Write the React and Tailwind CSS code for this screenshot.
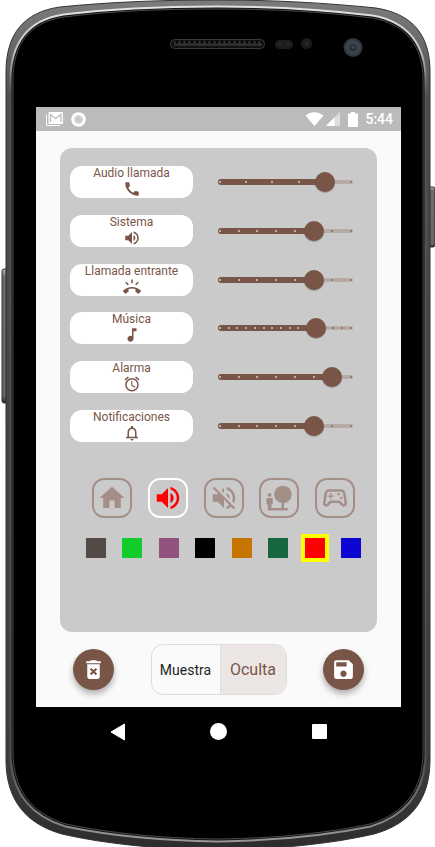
import { useState } from "react";
import {
  MdCall,
  MdVolumeUp,
  MdRingVolume,
  MdMusicNote,
  MdAlarm,
  MdNotificationsNone,
  MdHome,
  MdVolumeOff,
  MdNaturePeople,
  MdOutlineSportsEsports,
  MdDeleteForever,
  MdSave,
} from "react-icons/md";

const CHANNELS = [
  { id: "call", label: "Audio llamada", Icon: MdCall, value: 4, max: 5 },
  { id: "system", label: "Sistema", Icon: MdVolumeUp, value: 5, max: 7 },
  { id: "ring", label: "Llamada entrante", Icon: MdRingVolume, value: 5, max: 7 },
  { id: "music", label: "Música", Icon: MdMusicNote, value: 11, max: 15 },
  { id: "alarm", label: "Alarma", Icon: MdAlarm, value: 6, max: 7 },
  { id: "notifications", label: "Notificaciones", Icon: MdNotificationsNone, value: 5, max: 7 },
];

const PROFILES = [
  { id: "home", name: "Casa", Icon: MdHome },
  { id: "sound", name: "Sonido", Icon: MdVolumeUp },
  { id: "mute", name: "Silencio", Icon: MdVolumeOff },
  { id: "outdoors", name: "Exterior", Icon: MdNaturePeople },
  { id: "games", name: "Juegos", Icon: MdOutlineSportsEsports },
];

const COLORS = [
  { name: "Gris", style: "bg-[#544b49]" },
  { name: "Verde", style: "bg-[#11cd2c]" },
  { name: "Malva", style: "bg-[#91547f]" },
  { name: "Negro", style: "bg-black" },
  { name: "Naranja", style: "bg-[#c67500]" },
  { name: "Verde oscuro", style: "bg-[#14673f]" },
  { name: "Rojo", style: "bg-[#ff0000]" },
  { name: "Azul", style: "bg-[#0d05d2]" },
];

const OUTER =
  "M6 72C6 34 24 12 60 7C110 2 160 0 218 0C276 0 326 3 376 8C412 14 430 34 430 72V760C430 800 410 824 374 834C330 844 280 849 218 850C156 849 106 844 62 834C26 824 6 800 6 760Z";
const INNER =
  "M13 80C13 44 30 22 64 17C112 11 160 9 218 9C276 9 324 12 372 18C406 24 423 46 423 80V752C423 788 406 813 370 824C326 833 280 838 218 839C156 838 110 833 66 824C30 813 13 788 13 752Z";

function PhoneBody() {
  return (
    <svg
      className="absolute inset-0 h-full w-full"
      viewBox="0 0 435 847"
      preserveAspectRatio="none"
      aria-hidden="true"
    >
      <defs>
        <linearGradient id="body" x1="0" y1="0" x2="0" y2="1">
          <stop offset="0" stopColor="#7c7c7c" />
          <stop offset="0.04" stopColor="#6e6e6e" />
          <stop offset="0.12" stopColor="#4c4c4c" />
          <stop offset="0.9" stopColor="#3c3c3c" />
          <stop offset="1" stopColor="#2c2c2c" />
        </linearGradient>
        <linearGradient id="shine" x1="0" y1="0" x2="0" y2="1">
          <stop offset="0" stopColor="#e2e2e2" />
          <stop offset="0.05" stopColor="#c4c4c4" />
          <stop offset="0.1" stopColor="#555" />
          <stop offset="0.9" stopColor="#505050" />
          <stop offset="0.96" stopColor="#777" />
          <stop offset="1" stopColor="#969696" />
        </linearGradient>
        <linearGradient id="key" x1="0" y1="0" x2="0" y2="1">
          <stop offset="0" stopColor="#b5b5b5" />
          <stop offset="0.06" stopColor="#6c6c6c" />
          <stop offset="0.95" stopColor="#666" />
          <stop offset="1" stopColor="#222" />
        </linearGradient>
        <pattern id="mesh" width="5" height="5" patternUnits="userSpaceOnUse">
          <rect width="5" height="5" fill="#303030" />
          <circle cx="2" cy="2" r="1.5" fill="#030303" />
        </pattern>
      </defs>
      <rect x="2" y="269" width="7" height="134" rx="2" fill="url(#key)" stroke="#333" />
      <rect x="428" y="187" width="7" height="60" rx="2" fill="url(#key)" stroke="#333" />
      <path d={OUTER} fill="url(#body)" stroke="#333" />
      <path d={INNER} fill="#000" stroke="url(#shine)" strokeWidth="7" />
      <path d={INNER} fill="#000" stroke="#111" strokeWidth="3" />
      <path d={INNER} fill="#000" stroke="#484848" strokeWidth="1" />
      <rect x="170.500" y="39.500" width="94" height="9" rx="4" fill="#111" stroke="#393939" />
      <rect x="174" y="41" width="88" height="5" fill="url(#mesh)" />
      <rect x="275" y="40" width="18" height="9" rx="4.500" fill="#1c1c1c" />
      <circle cx="280" cy="44" r="1.500" fill="#2c2c2c" />
      <circle cx="288" cy="44" r="1.500" fill="#2c2c2c" />
      <circle cx="306.500" cy="43.500" r="5.500" fill="#1b1b1b" />
      <circle cx="306.500" cy="43.500" r="2.500" fill="#252525" />
      <circle cx="353" cy="47.500" r="9.500" fill="#30343b" />
      <circle cx="353" cy="47.500" r="7.500" fill="#3d434c" />
      <circle cx="353" cy="47.500" r="3.500" fill="#282d37" />
      <circle cx="353" cy="47" r="1.500" fill="#41485a" />
    </svg>
  );
}

function StatusBar() {
  return (
    <header className="flex h-6 items-center justify-between bg-[#bbbbbb] pr-2 pl-[10px] text-white">
      <div className="flex items-center gap-2">
        <svg className="h-[14px] w-[17px]" viewBox="0 0 17 14" aria-hidden="true">
          <path d="M.5 3V13.500H14" fill="none" stroke="currentColor" />
          <rect x="2.500" width="14.500" height="12" rx="1" fill="currentColor" />
          <path d="M4.500 10V2.500L9.750 6.500L15 2.500V10" fill="none" stroke="#bbb" strokeWidth="1.300" />
        </svg>
        <svg className="h-[15px] w-[15px]" viewBox="0 0 15 15" aria-hidden="true">
          <circle cx="7.500" cy="7.500" r="7.300" fill="currentColor" />
          <circle cx="7.500" cy="7.500" r="4.600" fill="#d8d8d8" />
          <circle cx="7.500" cy="7.500" r="2.800" fill="#cacaca" />
        </svg>
      </div>
      <div className="flex items-center">
        <svg className="h-[14px] w-[19px]" viewBox="0 0 19 14" aria-hidden="true">
          <path d="M.5 3.500C6 -1 13 -1 18.500 3.500L9.500 14Z" fill="currentColor" />
        </svg>
        <svg className="ml-[2px] h-[14px] w-[14px]" viewBox="0 0 14 14" aria-hidden="true">
          <path d="M14 0V14H0Z" fill="#dedede" />
          <path d="M8.500 5.500V14H0Z" fill="currentColor" />
        </svg>
        <svg className="ml-2 h-[15px] w-[10px]" viewBox="0 0 10 15" aria-hidden="true">
          <path d="M3 0H7V1.500H9.500L10 2V14.500L9.500 15H.5L0 14.500V2L.5 1.500H3Z" fill="currentColor" />
        </svg>
        <time className="ml-[7px] text-sm font-medium">5:44</time>
      </div>
    </header>
  );
}

function VolumeRow({ channel }) {
  const { id, label, Icon, max } = channel;
  const [value, setValue] = useState(channel.value);
  const steps = Array.from({ length: max + 1 }, (_, i) => i);

  return (
    <div className="flex items-center justify-between">
      <label
        htmlFor={id}
        className="flex h-8 w-[123px] flex-col items-center rounded-xl bg-white text-xs leading-[14px] text-[#795548]"
      >
        {label}
        <Icon className="h-[18px] w-[18px]" />
      </label>
      <div className="relative h-5 w-[151px]">
        <div className="absolute inset-x-2 top-2 h-1 rounded-full bg-[#b6aaa6]" />
        <div className="absolute inset-x-[10px] top-[7px] h-[6px]">
          <div
            className="-ml-[2px] h-full rounded-full bg-[#795548]"
            style={{ width: `${(value / max) * 100}%` }}
          />
        </div>
        <div className="absolute inset-x-[9px] top-[9px] flex justify-between">
          {steps.map((step) => (
            <span
              key={step}
              className={
                step < value
                  ? "h-[2px] w-[2px] rounded-full bg-[#d5c9c5]"
                  : "h-[2px] w-[2px] rounded-full bg-[#8b6c61]"
              }
            />
          ))}
        </div>
        <input
          id={id}
          type="range"
          min="0"
          max={max}
          value={value}
          onChange={(e) => setValue(Number(e.target.value))}
          className="absolute inset-0 m-0 h-5 w-full cursor-pointer appearance-none bg-transparent [&::-webkit-slider-thumb]:h-5 [&::-webkit-slider-thumb]:w-5 [&::-webkit-slider-thumb]:appearance-none [&::-webkit-slider-thumb]:rounded-full [&::-webkit-slider-thumb]:bg-[#795548] [&::-webkit-slider-thumb]:shadow-[0_1px_1px_rgba(0,0,0,0.25)]"
        />
      </div>
    </div>
  );
}

function Fab({ label, Icon }) {
  return (
    <button
      type="button"
      aria-label={label}
      className="flex h-[41px] w-[41px] items-center justify-center rounded-full bg-[#795548] text-white shadow-[0_4px_6px_rgba(0,0,0,0.3)]"
    >
      <Icon className="h-[25px] w-[25px]" />
    </button>
  );
}

export default function App() {
  const [profile, setProfile] = useState("sound");
  const [color, setColor] = useState("Rojo");

  return (
    <div className="relative bg-white pt-[107px] pr-[34px] pb-[91px] pl-9 font-[Roboto,sans-serif]">
      <PhoneBody />
      <div className="relative">
        <StatusBar />
        <main className="bg-[#fafafa] px-6 pt-[17px] pb-3">
          <section className="rounded-xl bg-[#cacaca] pt-[18px] pb-[74px]">
            <div className="flex h-[276px] flex-col justify-between pr-4 pl-[10px]">
              {CHANNELS.map((channel) => (
                <VolumeRow key={channel.id} channel={channel} />
              ))}
            </div>
            <div className="mt-9 flex justify-between pr-[22px] pl-8">
              {PROFILES.map(({ id, name, Icon }) => (
                <button
                  key={id}
                  type="button"
                  aria-label={name}
                  onClick={() => setProfile(id)}
                  className={
                    profile === id
                      ? "flex h-10 w-10 items-center justify-center rounded-xl border-2 border-white text-[#ff0000]"
                      : "flex h-10 w-10 items-center justify-center rounded-xl border-2 border-[#a48f87] text-[#a48f87]"
                  }
                >
                  <Icon className="h-[30px] w-[30px] shrink-0" />
                </button>
              ))}
            </div>
            <div className="mt-5 flex justify-between pr-4 pl-[26px]">
              {COLORS.map(({ name, style }) => (
                <button
                  key={name}
                  type="button"
                  aria-label={name}
                  onClick={() => setColor(name)}
                  className={`h-5 w-5 ${style} ${color === name ? "ring-4 ring-[#ffff00]" : ""}`}
                />
              ))}
            </div>
          </section>
          <div className="mt-3 flex items-center justify-between px-[13px]">
            <Fab label="Borrar" Icon={MdDeleteForever} />
            <div className="flex h-[51px] overflow-hidden rounded-xl border border-[#dedede]">
              <button type="button" className="w-[69px] border-r border-[#dedede] text-sm text-[#1f1f1f]">
                Muestra
              </button>
              <button type="button" className="w-[65px] bg-[#ebe5e4] text-base text-[#795548]">
                Oculta
              </button>
            </div>
            <Fab label="Guardar" Icon={MdSave} />
          </div>
        </main>
        <nav className="grid h-[49px] grid-cols-3 place-items-center bg-black px-[31px] text-white">
          <button type="button" aria-label="Atrás">
            <svg className="h-[18px] w-4" viewBox="0 0 16 18" aria-hidden="true">
              <path d="M14.500 1V17L1 9Z" fill="currentColor" stroke="currentColor" strokeLinejoin="round" />
            </svg>
          </button>
          <button type="button" aria-label="Inicio" className="h-[17px] w-[17px] rounded-full bg-white" />
          <button type="button" aria-label="Recientes" className="h-[15px] w-[15px] rounded-[1px] bg-white" />
        </nav>
      </div>
    </div>
  );
}
